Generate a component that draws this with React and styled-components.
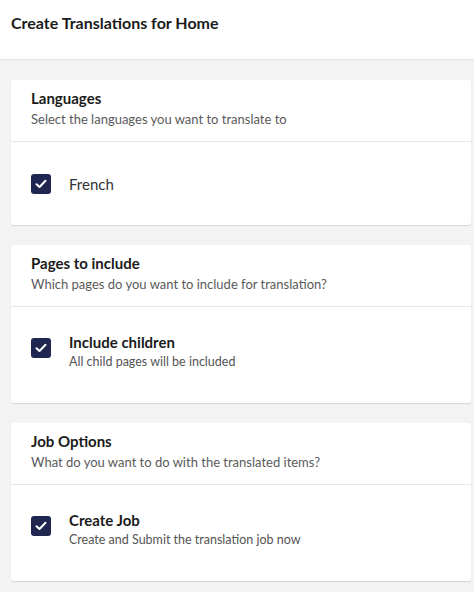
import React from "react";
import styled, { createGlobalStyle } from "styled-components";

const Global = createGlobalStyle`
  html, body { margin: 0; padding: 0; background: #f4f3f3; }
  body { font-family: Lato, "Open Sans", sans-serif; color: #1e1e1e; }
  * { box-sizing: border-box; }
`;

const Page = styled.div`
  width: 474px;
  min-height: 592px;
  background: #f4f3f3;
`;

const Header = styled.header`
  height: 60px;
  background: #fff;
  border-bottom: 1px solid #e6e4e4;
  padding: 13px 11px 0;
`;

const Title = styled.h1`
  margin: 0;
  font-size: 16px;
  font-weight: 700;
  line-height: 20px;
  color: #1b1b1b;
`;

const Body = styled.main`
  display: flex;
  flex-direction: column;
  gap: 20px;
  padding: 20px 3px 12px 11px;
`;

const Card = styled.section`
  background: #fff;
  border-radius: 3px;
  box-shadow: 0 1px 1px rgba(0, 0, 0, 0.12);
`;

const CardHead = styled.div`
  padding: 8px 20px 0;
  height: 62px;
  border-bottom: 1px solid #e8e6e6;
`;

const CardTitle = styled.h2`
  margin: 0;
  font-size: 15px;
  font-weight: 700;
  line-height: 20px;
  color: #1b1b1b;
`;

const CardSub = styled.p`
  margin: 2px 0 0;
  font-size: 13px;
  line-height: 18px;
  color: #5a5a5a;
`;

const CardContent = styled.div`
  display: flex;
  align-items: ${(p) => (p.$multi ? "flex-start" : "center")};
  gap: 18px;
  padding: ${(p) => (p.$multi ? "25px 20px 32px" : "0 20px")};
  height: ${(p) => (p.$multi ? "auto" : "83px")};
`;

const Box = styled.span`
  flex: none;
  width: 20px;
  height: 20px;
  border-radius: 3px;
  background: #1f2750;
  display: flex;
  align-items: center;
  justify-content: center;
  margin-top: ${(p) => (p.$multi ? "6px" : "0")};
`;

const Label = styled.div`
  display: flex;
  flex-direction: column;
`;

const LabelText = styled.span`
  font-size: 15px;
  line-height: 20px;
  font-weight: ${(p) => (p.$bold ? 700 : 400)};
  color: ${(p) => (p.$bold ? "#1b1b1b" : "#333")};
`;

const LabelDesc = styled.span`
  font-size: 12.5px;
  line-height: 18px;
  color: #555;
  margin-top: 1px;
`;

const Check = ({ multi }) => (
  <Box $multi={multi}>
    <svg width="12" height="10" viewBox="0 0 12 10">
      <path d="M1.5 5.2 L4.5 8 L10.5 1.8" fill="none" stroke="#fff" strokeWidth="2" strokeLinecap="round" strokeLinejoin="round" />
    </svg>
  </Box>
);

const sections = [
  {
    title: "Languages",
    sub: "Select the languages you want to translate to",
    label: "French",
  },
  {
    title: "Pages to include",
    sub: "Which pages do you want to include for translation?",
    label: "Include children",
    desc: "All child pages will be included",
  },
  {
    title: "Job Options",
    sub: "What do you want to do with the translated items?",
    label: "Create Job",
    desc: "Create and Submit the translation job now",
  },
];

export default function App() {
  return (
    <Page>
      <Global />
      <Header>
        <Title>Create Translations for Home</Title>
      </Header>
      <Body>
        {sections.map((s) => (
          <Card key={s.title}>
            <CardHead>
              <CardTitle>{s.title}</CardTitle>
              <CardSub>{s.sub}</CardSub>
            </CardHead>
            {s.desc ? (
              <CardContent $multi>
                <Check multi />
                <Label>
                  <LabelText $bold>{s.label}</LabelText>
                  <LabelDesc>{s.desc}</LabelDesc>
                </Label>
              </CardContent>
            ) : (
              <CardContent>
                <Check />
                <LabelText>{s.label}</LabelText>
              </CardContent>
            )}
          </Card>
        ))}
      </Body>
    </Page>
  );
}
